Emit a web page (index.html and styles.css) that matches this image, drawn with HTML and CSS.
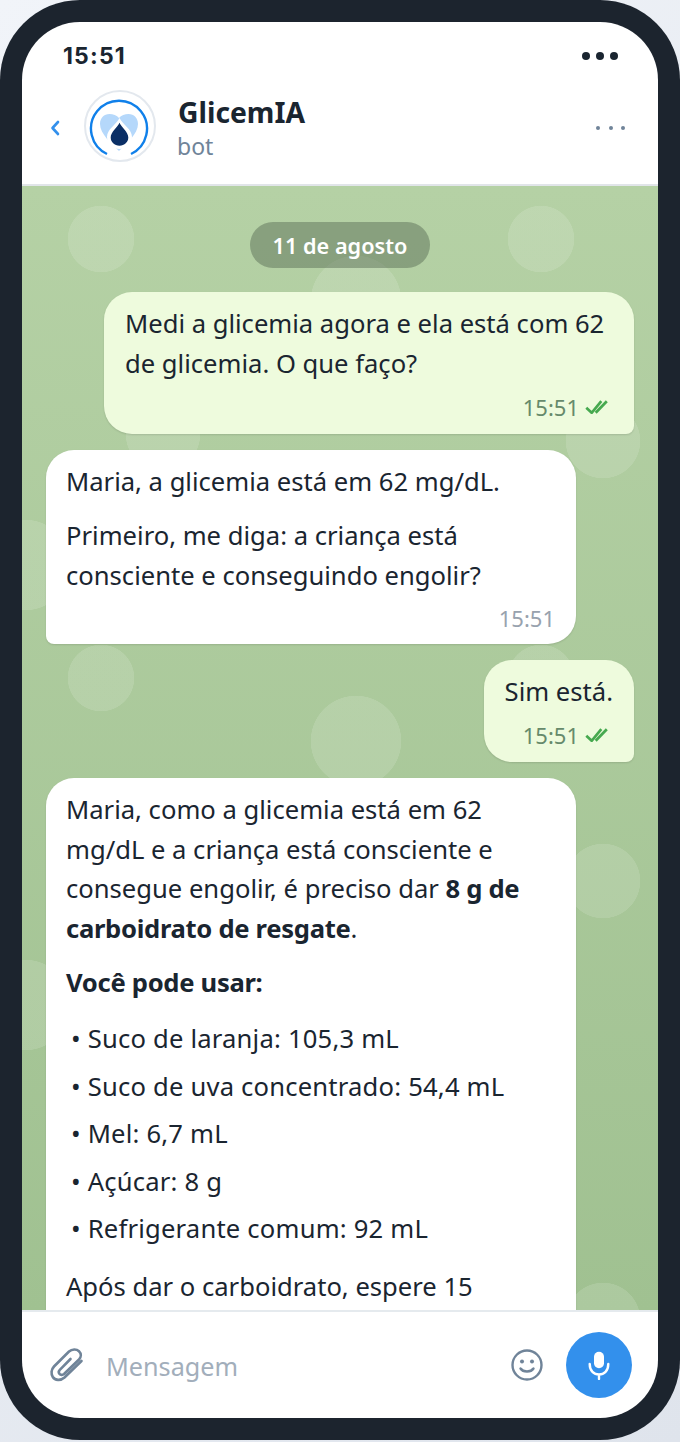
FILE: index.html
```html
<!DOCTYPE html>
<html lang="pt-BR">
<head>
  <meta charset="UTF-8">
  <title>GlicemIA</title>
  <link rel="stylesheet" href="styles.css">
</head>
<body>
  <div class="phone">
    <div class="screen">
      <div class="statusbar">
        <span class="clock">15:51</span>
        <div class="status-dots"><i></i><i></i><i></i></div>
      </div>
      <header class="chat-head">
        <svg class="back" width="12" height="18" viewBox="0 0 12 18"><path d="M9 3 L3.5 9 L9 15" fill="none" stroke="#3390ec" stroke-width="2.6" stroke-linecap="round" stroke-linejoin="round"/></svg>
        <div class="avatar">
          <svg width="64" height="64" viewBox="0 0 64 64">
            <path d="M19 60 A28 28 0 1 1 43 60" fill="none" stroke="#1080ea" stroke-width="2.4"/>
            <path d="M31 57 C24 50 12 40 12 30 C12 24 16 20 21.5 20 C25 20 29 21.5 31 24 C33 21.5 37 20 40.5 20 C46 20 50 24 50 30 C50 40 38 50 31 57 Z" fill="#b5d8fb"/>
            <path d="M31.5 24 C35 31 44 35 44 43 C44 50 38 55 31.5 55 C25 55 19 50 19 43 C19 35 28 31 31.5 24 Z" fill="#fff"/>
            <path d="M31.5 28.7 C34 34 40.3 38 40.3 43.5 C40.3 48 36.5 51.7 31.5 51.7 C26.5 51.7 22.7 48 22.7 43.5 C22.7 38 29 34 31.5 28.7 Z" fill="#0b2f66"/>
          </svg>
        </div>
        <div class="head-text">
          <div class="chat-name">GlicemIA</div>
          <div class="chat-sub">bot</div>
        </div>
        <div class="head-menu"><i></i><i></i><i></i></div>
      </header>
      <main class="chat">
        <div class="date-pill">11 de agosto</div>
        <div class="msg out">
          <p>Medi a glicemia agora e ela está com 62 de glicemia. O que faço?</p>
          <div class="meta"><span>15:51</span>
            <svg class="ticks" width="24" height="14" viewBox="0 0 24 14"><path d="M1.3 7.8 L6.7 12.8 L16.3 1.2 M10.7 12.8 L21.8 1.2" fill="none" stroke="#46a94f" stroke-width="2.7"/></svg>
          </div>
        </div>
        <div class="msg in">
          <p>Maria, a glicemia está em 62 mg/dL.</p>
          <p>Primeiro, me diga: a criança está consciente e conseguindo engolir?</p>
          <div class="meta"><span>15:51</span></div>
        </div>
        <div class="msg out">
          <p>Sim está.</p>
          <div class="meta"><span>15:51</span>
            <svg class="ticks" width="24" height="14" viewBox="0 0 24 14"><path d="M1.3 7.8 L6.7 12.8 L16.3 1.2 M10.7 12.8 L21.8 1.2" fill="none" stroke="#46a94f" stroke-width="2.7"/></svg>
          </div>
        </div>
        <div class="msg in">
          <p>Maria, como a glicemia está em 62 mg/dL e a criança está consciente e consegue engolir, é preciso dar <b>8 g de carboidrato de resgate</b>.</p>
          <p><b>Você pode usar:</b></p>
          <ul>
            <li>Suco de laranja: 105,3 mL</li>
            <li>Suco de uva concentrado: 54,4 mL</li>
            <li>Mel: 6,7 mL</li>
            <li>Açúcar: 8 g</li>
            <li>Refrigerante comum: 92 mL</li>
          </ul>
          <p>Após dar o carboidrato, espere 15 minutos e meça de novo.</p>
        </div>
      </main>
      <footer class="composer">
        <svg class="clip" width="36" height="36" viewBox="0 0 36 36"><path d="M32.5 14 L15.5 30.5 C11.5 34 6 33.5 3.8 30 C1.8 27 2.2 22.5 5 19.5 L20 4.5 C23 1.8 27.5 1.8 30 4.2 C32.5 6.7 32.3 10 30 12.5 L15 27 C13.5 28.3 11.5 28 10.5 26.8 C9.5 25.6 9.6 24 10.8 22.8 L21.5 12" fill="none" stroke="#708499" stroke-width="2.6" stroke-linecap="round"/></svg>
        <div class="placeholder">Mensagem</div>
        <svg class="smile" width="34" height="34" viewBox="0 0 34 34"><circle cx="17" cy="17" r="14.5" fill="none" stroke="#708499" stroke-width="2.4"/><circle cx="12" cy="13.5" r="2" fill="#708499"/><circle cx="22" cy="13.5" r="2" fill="#708499"/><path d="M10.5 20.5 C13 24.5 21 24.5 23.5 20.5" fill="none" stroke="#708499" stroke-width="2.4" stroke-linecap="round"/></svg>
        <button class="mic">
          <svg width="26" height="30" viewBox="0 0 26 30"><rect x="8" y="1.7" width="10" height="16.6" rx="5" fill="#fff"/><path d="M3.7 14 C3.7 21 8 24.5 13 24.5 C18 24.5 22.3 21 22.3 14 M13 24.5 L13 29" fill="none" stroke="#fff" stroke-width="2.4" stroke-linecap="round"/></svg>
        </button>
      </footer>
    </div>
  </div>
</body>
</html>
```

FILE: styles.css
```css
:root {
  --frame: #1c242e;
  --ink: #1a2530;
  --muted: #708499;
  --blue: #3390ec;
  --dot: rgba(255,255,255,.13);
}
* { box-sizing: border-box; }
html, body { height: 100%; }
body {
  margin: 0;
  background: linear-gradient(135deg, #f1f4f9 0%, #dfe4ec 100%);
  font-family: "Noto Sans", sans-serif;
  color: var(--ink);
}
.phone {
  width: 680px;
  height: 1440px;
  background: var(--frame);
  border-radius: 80px;
  padding: 22px;
}
.screen {
  height: 1396px;
  background: #fff;
  border-radius: 58px;
  overflow: hidden;
  display: flex;
  flex-direction: column;
}
.statusbar {
  height: 52px;
  padding: 16px 40px 0 41px;
  display: flex;
  align-items: center;
  justify-content: space-between;
  flex: none;
}
.clock { font-family: Inter, sans-serif; font-size: 23px; font-weight: 700; letter-spacing: 1.2px; }
.status-dots { display: flex; gap: 6px; }
.status-dots i { width: 8px; height: 8px; border-radius: 50%; background: var(--ink); }
.chat-head {
  height: 112px;
  flex: none;
  display: flex;
  align-items: center;
  padding: 0 33px 6px 27px;
  border-bottom: 2px solid #e1e5e9;
}
.back { flex: none; margin-top: 4px; }
.avatar {
  width: 72px;
  height: 72px;
  margin-left: 23px;
  border: 2px solid #e3e8ee;
  border-radius: 50%;
  display: flex;
  align-items: center;
  justify-content: center;
  flex: none;
}
.head-text { margin-left: 22px; margin-top: 4px; flex: 1; }
.chat-name { font-size: 28.3px; font-weight: 700; line-height: 34px; }
.chat-sub { font-size: 23px; color: var(--muted); line-height: 32px; margin-top: 1px; margin-left: -1px; }
.head-menu { display: flex; gap: 8.5px; margin-top: 4px; }
.head-menu i { width: 4px; height: 4px; border-radius: 50%; background: var(--muted); }
.chat {
  flex: 1;
  min-height: 0;
  overflow: hidden;
  padding: 36px 24px 0;
  display: flex;
  flex-direction: column;
  gap: 16px;
  background:
    radial-gradient(circle at 79px 53px, var(--dot) 33px, transparent 33.5px),
    radial-gradient(circle at 519px 53px, var(--dot) 33px, transparent 33.5px),
    radial-gradient(circle at 334px 115px, var(--dot) 45px, transparent 45.5px),
    radial-gradient(circle at 141px 248px, var(--dot) 37px, transparent 37.5px),
    radial-gradient(circle at 581px 255px, var(--dot) 37px, transparent 37.5px),
    radial-gradient(circle at 3px 379px, var(--dot) 45px, transparent 45.5px),
    radial-gradient(circle at 79px 492px, var(--dot) 33px, transparent 33.5px),
    radial-gradient(circle at 519px 492px, var(--dot) 33px, transparent 33.5px),
    radial-gradient(circle at 334px 555px, var(--dot) 45px, transparent 45.5px),
    radial-gradient(circle at 581px 695px, var(--dot) 37px, transparent 37.5px),
    radial-gradient(circle at 3px 819px, var(--dot) 45px, transparent 45.5px),
    radial-gradient(circle at 581px 1134px, var(--dot) 37px, transparent 37.5px),
    linear-gradient(180deg, #b5d1a5 0%, #a0c191 100%);
}
.date-pill {
  align-self: center;
  height: 46px;
  padding: 0 23px;
  margin-bottom: 8px;
  border-radius: 23px;
  background: rgba(92,112,88,.5);
  color: #fff;
  font-size: 21.7px;
  font-weight: 600;
  display: flex;
  align-items: center;
  flex: none;
}
.msg {
  flex: none;
  padding: 12px 21px;
  font-size: 25.6px;
  line-height: 1.55;
  box-shadow: 0 1px 2px rgba(0,0,0,.12);
}
.msg p { margin: 0 0 14.5px; }
.msg p:last-of-type { margin-bottom: 0; }
.msg b { letter-spacing: -.3px; }
.msg.out {
  align-self: flex-end;
  max-width: 530px;
  background: #eefbdd;
  border-radius: 28px 28px 8px 28px;
}
.msg.in {
  align-self: flex-start;
  width: 530px;
  padding-left: 20px;
  background: #fff;
  border-radius: 28px 28px 28px 8px;
}
.meta {
  display: flex;
  justify-content: flex-end;
  align-items: center;
  gap: 6px;
  height: 28.5px;
  margin-top: 8px;
  font-size: 22px;
  line-height: 1;
  color: #98a2ae;
}
.msg.out .meta { height: 30.6px; color: #668a6b; padding-right: 4px; }
ul { list-style: none; margin: -2px 0 14.5px; padding: 0; }
li { line-height: 47.5px; padding-left: 5px; letter-spacing: .2px; }
li::before { content: "• "; }
.composer {
  height: 108px;
  flex: none;
  border-top: 2px solid #e5eaee;
  display: flex;
  align-items: center;
  padding: 0 26px 0 27px;
}
.clip { flex: none; }
.placeholder { flex: 1; margin-left: 21px; padding-top: 2px; font-size: 25.2px; color: #a2aebb; }
.smile { flex: none; margin-right: 22px; }
.mic {
  width: 66px;
  height: 66px;
  border: 0;
  border-radius: 50%;
  background: var(--blue);
  display: flex;
  align-items: center;
  justify-content: center;
  flex: none;
  padding: 0;
}
```
